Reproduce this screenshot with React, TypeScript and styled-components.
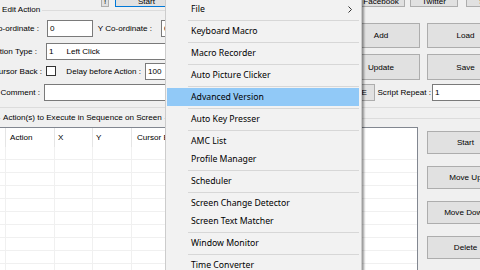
import styled, { createGlobalStyle } from "styled-components";

const GlobalStyle = createGlobalStyle`
  html, body {
    margin: 0;
    padding: 0;
    background: #f0f0f0;
  }
`;

const Screen = styled.div`
  position: relative;
  width: 480px;
  height: 270px;
  overflow: hidden;
  background: #f0f0f0;
  font-family: "Liberation Sans", Arial, sans-serif;
  font-size: 8.1px;
  color: #000;
`;

const TopStrip = styled.div`
  display: flex;
  align-items: flex-end;
  height: 7px;
`;

const Button = styled.div<{ $w: number; $h?: number; $ml?: number; $focus?: boolean; $end?: boolean }>`
  flex: none;
  box-sizing: border-box;
  width: ${(p) => p.$w}px;
  height: ${(p) => p.$h ?? 25}px;
  margin-left: ${(p) => p.$ml ?? 0}px;
  background: #e1e1e1;
  border: 1px solid ${(p) => (p.$focus ? "#0078d7" : "#adadad")};
  display: flex;
  align-items: center;
  justify-content: ${(p) => (p.$end ? "flex-end" : "center")};
  padding-right: ${(p) => (p.$end ? 7 : 0)}px;
  white-space: nowrap;
`;

const EditRow = styled.div`
  display: flex;
  align-items: flex-start;
  margin-top: -1px;
`;

const Group = styled.fieldset<{ $w: number; $mt: number; $pt: number; $pb: number; $pl: number }>`
  flex: none;
  margin: ${(p) => p.$mt}px 0 0 -6px;
  width: ${(p) => p.$w}px;
  box-sizing: border-box;
  border: 1px solid #dcdcdc;
  padding: ${(p) => p.$pt}px 0 ${(p) => p.$pb}px ${(p) => p.$pl}px;
  display: flex;
  min-width: 0;
`;

const Legend = styled.legend<{ $ml: number }>`
  padding: 0 2px;
  margin-left: ${(p) => p.$ml}px;
  line-height: 8px;
  white-space: nowrap;
`;

const FieldGrid = styled.div`
  width: 340px;
  flex: none;
  display: grid;
  grid-template-rows: 23px 20px 21px 17px;
`;

const FieldRow = styled.div`
  display: flex;
  align-items: flex-start;
  height: 17px;
`;

const Caption = styled.div<{ $w: number }>`
  flex: none;
  width: ${(p) => p.$w}px;
  height: 17px;
  display: flex;
  align-items: center;
  justify-content: flex-end;
  white-space: nowrap;
`;

const TextBox = styled.div<{ $w: number; $ml: number }>`
  flex: none;
  box-sizing: border-box;
  width: ${(p) => p.$w}px;
  height: 17px;
  margin-left: ${(p) => p.$ml}px;
  background: #fff;
  border: 1px solid #7a7a7a;
  padding-left: 2px;
  display: flex;
  align-items: center;
  white-space: nowrap;
`;

const ComboText = styled.span`
  margin-left: 13px;
`;

const CheckBox = styled.div`
  flex: none;
  box-sizing: border-box;
  width: 10px;
  height: 10px;
  margin: 3px 0 0 4px;
  background: #fff;
  border: 1px solid #333;
`;

const SidePanel = styled.div`
  flex: 1;
  box-sizing: border-box;
  height: 102px;
  padding-top: 17px;
  border-bottom: 1px solid #dcdcdc;
  display: flex;
  flex-direction: column;
`;

const SideRow = styled.div<{ $h: number; $mt: number }>`
  display: flex;
  align-items: flex-start;
  height: ${(p) => p.$h}px;
  margin-top: ${(p) => p.$mt}px;
`;

const ListView = styled.div`
  flex: none;
  box-sizing: border-box;
  width: 420px;
  height: 160px;
  background: #fff;
  border: 1px solid #828790;
  display: flex;
  flex-direction: column;
`;

const HeaderRow = styled.div`
  display: flex;
  height: 19px;
  flex: none;
`;

const HeaderCell = styled.div<{ $w?: number; $pl: number }>`
  box-sizing: border-box;
  ${(p) => (p.$w ? `width: ${p.$w}px; flex: none;` : "flex: 1;")}
  padding-left: ${(p) => p.$pl}px;
  border-right: ${(p) => (p.$w ? "1px solid #e5e5e5" : "none")};
  display: flex;
  align-items: center;
  white-space: nowrap;
  overflow: hidden;
`;

const DataRow = styled.div`
  display: flex;
  height: 13px;
  flex: none;
  box-sizing: border-box;
  border-bottom: 1px solid #f0f0f0;
`;

const DataCell = styled.div<{ $w?: number }>`
  box-sizing: border-box;
  ${(p) => (p.$w ? `width: ${p.$w}px; flex: none; border-right: 1px solid #f0f0f0;` : "flex: 1;")}
`;

const ButtonCol = styled.div`
  display: flex;
  flex-direction: column;
  margin-left: 9px;
  padding-top: 4px;
  gap: 12px;
`;

const Menu = styled.div`
  position: absolute;
  left: 165px;
  top: -3px;
  width: 197px;
  box-sizing: border-box;
  padding: 2px 0;
  background: #f2f2f2;
  border: 1px solid #cccccc;
  box-shadow: 2px 2px 2px rgba(0, 0, 0, 0.4);
  font-family: "Noto Sans", "Open Sans", sans-serif;
  font-size: 8.7px;
  color: #000;
`;

const MenuItem = styled.div<{ $active?: boolean }>`
  height: 18px;
  margin: 0 2px 0 1px;
  padding-left: 24px;
  display: flex;
  align-items: center;
  white-space: nowrap;
  background: ${(p) => (p.$active ? "#91c9f7" : "transparent")};
`;

const MenuSep = styled.div`
  height: 1px;
  margin: 2px 2px 1px 22px;
  background: #d7d7d7;
`;

const Chevron = styled.svg`
  margin-left: auto;
  margin-right: 7px;
`;

const columns = [
  { w: 7, pl: 0, label: "" },
  { w: 49, pl: 4, label: "Action" },
  { w: 38, pl: 3, label: "X" },
  { w: 39, pl: 3, label: "Y" },
  { w: 90, pl: 5, label: "Cursor Back" },
  { w: 0, pl: 5, label: "Delay" },
];

type MenuEntry = { label?: string; sep?: boolean; active?: boolean; sub?: boolean };

const menu: MenuEntry[] = [
  { label: "File", sub: true },
  { sep: true },
  { label: "Keyboard Macro" },
  { sep: true },
  { label: "Macro Recorder" },
  { sep: true },
  { label: "Auto Picture Clicker" },
  { sep: true },
  { label: "Advanced Version", active: true },
  { sep: true },
  { label: "Auto Key Presser" },
  { sep: true },
  { label: "AMC List" },
  { label: "Profile Manager" },
  { sep: true },
  { label: "Scheduler" },
  { sep: true },
  { label: "Screen Change Detector" },
  { label: "Screen Text Matcher" },
  { sep: true },
  { label: "Window Monitor" },
  { sep: true },
  { label: "Time Converter" },
];

const App = () => {
  return (
    <Screen>
      <GlobalStyle />

      <TopStrip>
        <Button $w={8} $h={12} $ml={101}>!</Button>
        <Button $w={63} $h={12} $ml={6} $focus>Start</Button>
        <Button $w={48} $h={12} $ml={179}>Facebook</Button>
        <Button $w={48} $h={12} $ml={5}>Twitter</Button>
        <Button $w={48} $h={12} $ml={8}>Share</Button>
      </TopStrip>

      <EditRow>
        <Group $w={346} $mt={0} $pt={6} $pb={6} $pl={5}>
          <Legend $ml={0}>Edit Action</Legend>
          <FieldGrid>
            <FieldRow>
              <Caption $w={39}>X Co-ordinate :</Caption>
              <TextBox $w={46} $ml={8}>0</TextBox>
              <Caption $w={59}>Y Co-ordinate :</Caption>
              <TextBox $w={46} $ml={9}>0</TextBox>
            </FieldRow>
            <FieldRow>
              <Caption $w={37}>Action Type :</Caption>
              <TextBox $w={260} $ml={9}>
                1<ComboText>Left Click</ComboText>
              </TextBox>
            </FieldRow>
            <FieldRow>
              <Caption $w={42}>Cursor Back :</Caption>
              <CheckBox />
              <Caption $w={85}>Delay before Action :</Caption>
              <TextBox $w={60} $ml={4}>100</TextBox>
            </FieldRow>
            <FieldRow>
              <Caption $w={40}>Comment :</Caption>
              <TextBox $w={290} $ml={4} />
            </FieldRow>
          </FieldGrid>
        </Group>

        <SidePanel>
          <SideRow $h={25} $mt={0}>
            <Button $w={78} $ml={2}>Add</Button>
            <Button $w={77} $ml={7}>Load</Button>
          </SideRow>
          <SideRow $h={26} $mt={6}>
            <Button $w={78} $h={26} $ml={2}>Update</Button>
            <Button $w={77} $h={26} $ml={7}>Save</Button>
          </SideRow>
          <SideRow $h={17} $mt={4}>
            <Button $w={30} $h={17} $ml={5} $end>E</Button>
            <Caption $w={56}>Script Repeat :</Caption>
            <TextBox $w={80} $ml={1}>1</TextBox>
          </SideRow>
        </SidePanel>
      </EditRow>

      <Group $w={520} $mt={6} $pt={5} $pb={0} $pl={3}>
        <Legend $ml={3}>Action(s) to Execute in Sequence on Screen</Legend>
        <ListView>
          <HeaderRow>
            {columns.map((c, i) => (
              <HeaderCell key={i} $w={c.w || undefined} $pl={c.pl}>
                {c.label}
              </HeaderCell>
            ))}
          </HeaderRow>
          {Array.from({ length: 10 }).map((_, r) => (
            <DataRow key={r}>
              {columns.map((c, i) => (
                <DataCell key={i} $w={c.w || undefined} />
              ))}
            </DataRow>
          ))}
        </ListView>
        <ButtonCol>
          <Button $w={77} $h={23}>Start</Button>
          <Button $w={77} $h={23}>Move Up</Button>
          <Button $w={77} $h={23}>Move Down</Button>
          <Button $w={77} $h={23}>Delete</Button>
          <Button $w={77} $h={23}>Clear</Button>
        </ButtonCol>
      </Group>

      <Menu>
        {menu.map((m, i) =>
          m.sep ? (
            <MenuSep key={i} />
          ) : (
            <MenuItem key={i} $active={m.active}>
              {m.label}
              {m.sub && (
                <Chevron width="4" height="7" viewBox="0 0 4 7">
                  <path d="M0.5 0.5 L3.5 3.5 L0.5 6.5" fill="none" stroke="#333" strokeWidth="1" />
                </Chevron>
              )}
            </MenuItem>
          )
        )}
      </Menu>
    </Screen>
  );
};

export default App;
